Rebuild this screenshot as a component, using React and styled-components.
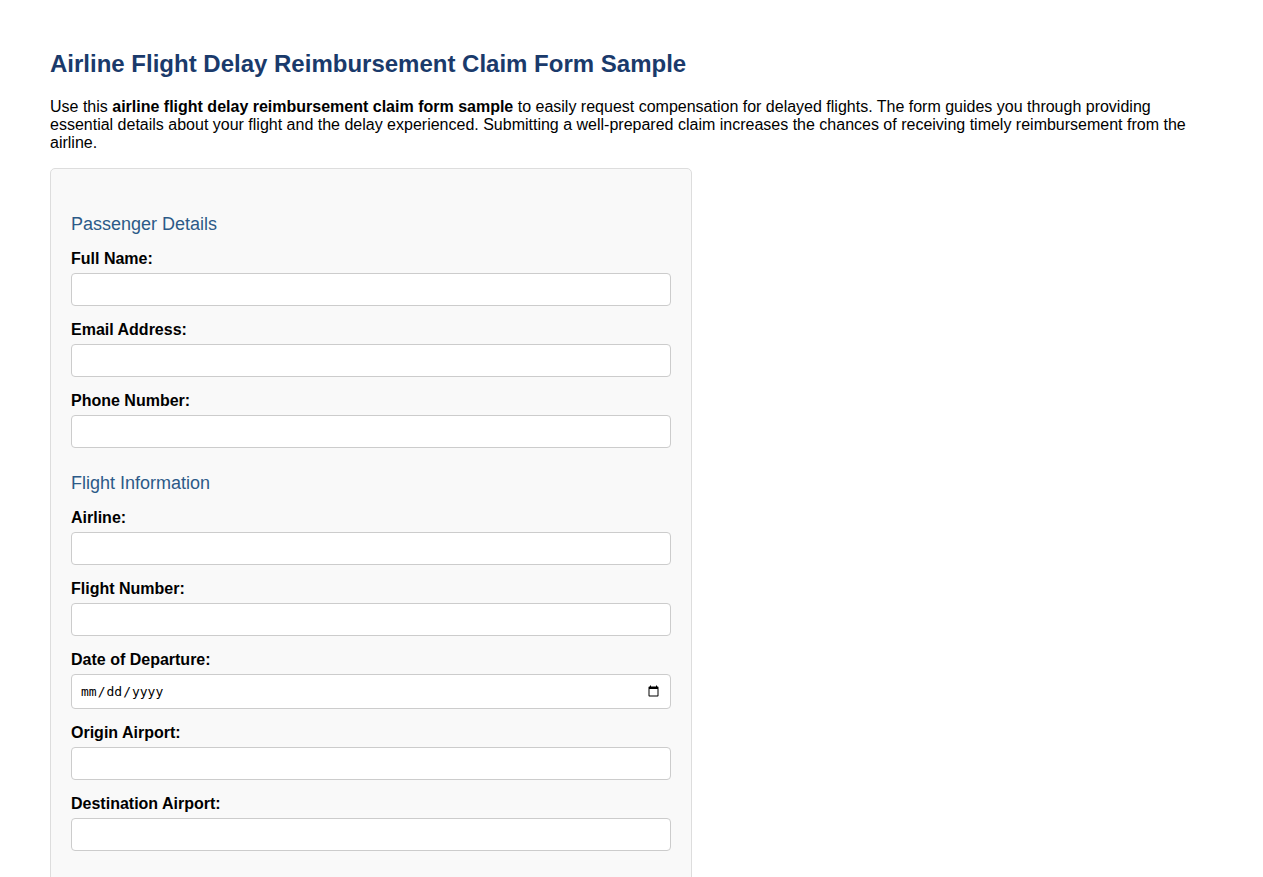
import React from 'react';
import styled, {createGlobalStyle} from 'styled-components';

const GlobalStyle = createGlobalStyle`
    body{
        margin:0;
        padding:0;
        background:#fff;
        font-family:"Liberation Sans", Arial, sans-serif;
        color:#000;
    }
`;

const Page = styled.div`
    padding:40px 50px;
`;

const Title = styled.h1`
    font-size:24px;
    font-weight:700;
    color:#1a3a6b;
    margin:10px 0 20px;
    line-height:28px;
`;

const Intro = styled.p`
    font-size:16px;
    line-height:18px;
    margin:0 0 16px;
    max-width:1150px;
`;

const Form = styled.form`
    width:600px;
    background:#f9f9f9;
    border:1px solid #ddd;
    border-radius:5px;
    padding:20px;
    padding-top:23px;
`;

const Section = styled.h2`
    font-size:18px;
    font-weight:400;
    color:#2c5a88;
    line-height:21px;
    margin:${props => props.first ? '22px' : '25px'} 0 15px;
`;

const Label = styled.label`
    display:block;
    font-size:16px;
    font-weight:700;
    line-height:18px;
    margin-bottom:5px;
`;

const Field = styled.div`
    margin-bottom:15px;
`;

const Input = styled.input`
    display:block;
    box-sizing:border-box;
    width:600px;
    height:${props => props.type === 'date' ? '35px' : '33px'};
    padding:8px;
    border:1px solid #ccc;
    border-radius:4px;
    background:#fff;
    font-size:13px;
    font-family:"DejaVu Sans Mono", monospace;
`;

const sections = [
    {title:'Passenger Details', fields:[
        {label:'Full Name:', type:'text'},
        {label:'Email Address:', type:'email'},
        {label:'Phone Number:', type:'tel'},
    ]},
    {title:'Flight Information', fields:[
        {label:'Airline:', type:'text'},
        {label:'Flight Number:', type:'text'},
        {label:'Date of Departure:', type:'date'},
        {label:'Origin Airport:', type:'text'},
        {label:'Destination Airport:', type:'text'},
    ]},
];

export default function App(){
    return(
        <Page>
            <GlobalStyle/>
            <Title>Airline Flight Delay Reimbursement Claim Form Sample</Title>
            <Intro>
                Use this <strong>airline flight delay reimbursement claim form sample</strong> to easily request compensation for delayed flights. The form guides you through providing essential details about your flight and the delay experienced. Submitting a well-prepared claim increases the chances of receiving timely reimbursement from the airline.
            </Intro>
            <Form onSubmit={e => e.preventDefault()}>
                {sections.map((s, i) =>
                    <div key={s.title}>
                        <Section first={i === 0}>{s.title}</Section>
                        {s.fields.map(f =>
                            <Field key={f.label}>
                                <Label>{f.label}</Label>
                                <Input type={f.type}/>
                            </Field>
                        )}
                    </div>
                )}
            </Form>
        </Page>
    )
}
